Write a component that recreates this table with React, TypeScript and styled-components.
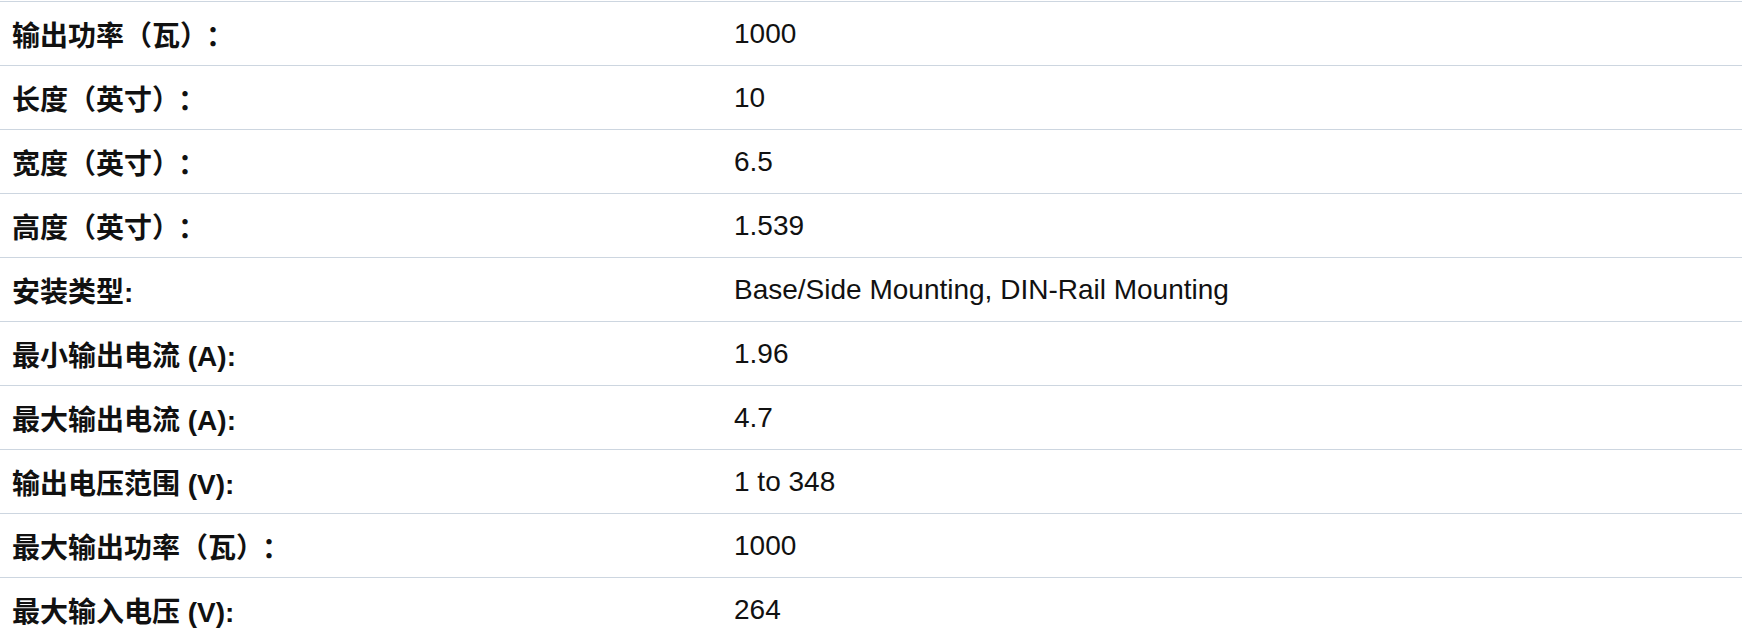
import styled, { createGlobalStyle } from 'styled-components'

const GlobalStyle = createGlobalStyle`
  html, body {
    margin: 0;
    padding: 0;
    background-color: #fff;
  }
  body {
    font-family: "Liberation Sans", Arial, "Noto Sans CJK SC", sans-serif;
    color: #111;
  }
`

const SpecTable = styled.section`
  padding-top: 1px;
  width: 100%;
`

const SpecRow = styled.div`
  display: grid;
  grid-template-columns: 722px 1fr;
  height: 64px;
  box-sizing: border-box;
  border-top: 1px solid #cdd6e0;
`

const SpecCell = styled.div<{ $label?: boolean }>`
  display: flex;
  align-items: center;
  padding: 0 12px;
  font-size: 28px;
  font-weight: ${(p) => (p.$label ? 700 : 400)};
  white-space: nowrap;
  text-spacing-trim: space-all;
`

const WideColon = styled.span`
  margin-left: -2px;
`

interface Spec {
  label: string
  value: string
}

const specs: Spec[] = [
  { label: '输出功率（瓦）：', value: '1000' },
  { label: '长度（英寸）：', value: '10' },
  { label: '宽度（英寸）：', value: '6.5' },
  { label: '高度（英寸）：', value: '1.539' },
  { label: '安装类型:', value: 'Base/Side Mounting, DIN-Rail Mounting' },
  { label: '最小输出电流 (A):', value: '1.96' },
  { label: '最大输出电流 (A):', value: '4.7' },
  { label: '输出电压范围 (V):', value: '1 to 348' },
  { label: '最大输出功率（瓦）：', value: '1000' },
  { label: '最大输入电压 (V):', value: '264' },
]

const renderLabel = (label: string) =>
  label.endsWith('：')
    ? <>{label.slice(0, -1)}<WideColon>：</WideColon></>
    : label

export default function App() {
  return (
    <>
      <GlobalStyle />
      <SpecTable>
        {specs.map((spec, index) => (
          <SpecRow key={index}>
            <SpecCell $label>{renderLabel(spec.label)}</SpecCell>
            <SpecCell>{spec.value}</SpecCell>
          </SpecRow>
        ))}
      </SpecTable>
    </>
  )
}
